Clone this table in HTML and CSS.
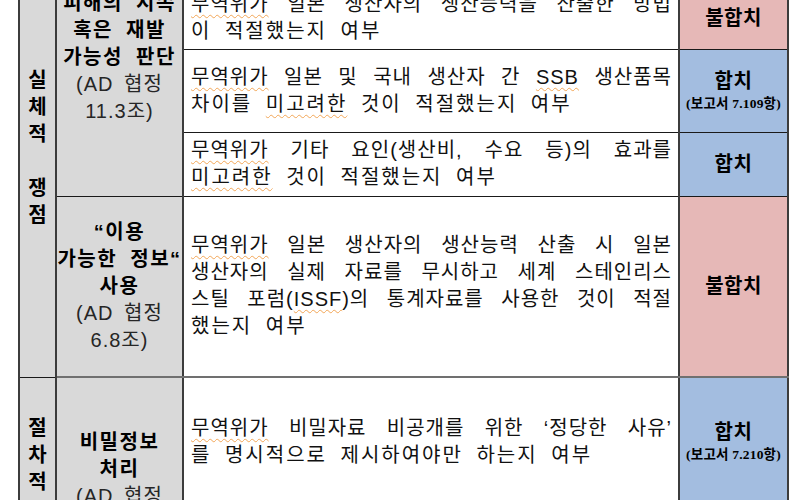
FILE: index.html
```html
<!DOCTYPE html>
<html lang="ko">
<head>
<meta charset="utf-8">
<title>쟁점별 판정 결과</title>
<link rel="stylesheet" href="styles.css">
</head>
<body>
<div class="page">
<table class="grid">
  <colgroup>
    <col class="c1"><col class="c2"><col class="c3"><col class="c4">
  </colgroup>
  <tbody>
    <tr class="r0">
      <td class="cat" rowspan="5">
        <span class="ln">실</span><span class="ln">체</span><span class="ln">적</span><span class="ln">&nbsp;</span><span class="ln">쟁</span><span class="ln">점</span>
      </td>
      <td class="topic" rowspan="4">
        <span class="ln b">피해의 지속</span>
        <span class="ln b">혹은 재발</span>
        <span class="ln b">가능성 판단</span>
        <span class="ln n">(AD 협정</span>
        <span class="ln n">11.3조)</span>
      </td>
      <td class="desc">
        <span class="ln j"><span class="sp">무역위가</span> 국내 산업의 취약성을 판단한 것이</span>
        <span class="ln">적절했는지 여부</span>
      </td>
      <td class="res ok"><span class="lab">합치</span></td>
    </tr>
    <tr class="r1">
      <td class="desc">
        <span class="ln j"><span class="sp">무역위가</span> 일본 생산자의 생산능력을 산출한 방법</span>
        <span class="ln">이 적절했는지 여부</span>
      </td>
      <td class="res ng"><span class="lab">불합치</span></td>
    </tr>
    <tr class="r2">
      <td class="desc">
        <span class="ln j"><span class="sp">무역위가</span> 일본 및 국내 생산자 간 <span class="sp">SSB</span> 생산품목</span>
        <span class="ln">차이를 <span class="sp">미고려한</span> 것이 적절했는지 여부</span>
      </td>
      <td class="res ok"><span class="lab">합치</span><span class="ref">(보고서 7.109항)</span></td>
    </tr>
    <tr class="r3">
      <td class="desc">
        <span class="ln j"><span class="sp">무역위가</span> 기타 요인(생산비, 수요 등)의 효과를</span>
        <span class="ln"><span class="sp">미고려한</span> 것이 적절했는지 여부</span>
      </td>
      <td class="res ok"><span class="lab">합치</span></td>
    </tr>
    <tr class="r4">
      <td class="topic">
        <span class="ln b">“이용</span>
        <span class="ln b">가능한 정보“</span>
        <span class="ln b">사용</span>
        <span class="ln n">(AD 협정</span>
        <span class="ln n">6.8조)</span>
      </td>
      <td class="desc">
        <span class="ln j"><span class="sp">무역위가</span> 일본 생산자의 생산능력 산출 시 일본</span>
        <span class="ln j">생산자의 실제 자료를 무시하고 세계 스테인리스</span>
        <span class="ln j">스틸 포럼(<span class="sp">ISSF</span>)의 통계자료를 사용한 것이 적절</span>
        <span class="ln">했는지 여부</span>
      </td>
      <td class="res ng"><span class="lab">불합치</span></td>
    </tr>
    <tr class="r5">
      <td class="cat" rowspan="2">
        <span class="ln">절</span><span class="ln">차</span><span class="ln">적</span><span class="ln">&nbsp;</span><span class="ln">쟁</span><span class="ln">점</span>
      </td>
      <td class="topic" rowspan="2">
        <span class="ln b">비밀정보</span>
        <span class="ln b">처리</span>
        <span class="ln n">(AD 협정</span>
        <span class="ln n">6.5조 및</span>
        <span class="ln n">6.4조)</span>
      </td>
      <td class="desc">
        <span class="ln j"><span class="sp">무역위가</span> 비밀자료 비공개를 위한 ‘정당한 사유’</span>
        <span class="ln">를 명시적으로 제시하여야만 하는지 여부</span>
      </td>
      <td class="res ok"><span class="lab">합치</span><span class="ref">(보고서 7.210항)</span></td>
    </tr>
    <tr class="r6">
      <td class="desc">
        <span class="ln j"><span class="sp">무역위가</span> 비밀자료의 요약본 제출을 요구하지</span>
        <span class="ln">않은 것이 적절했는지 여부</span>
      </td>
      <td class="res ok"><span class="lab">합치</span></td>
    </tr>
  </tbody>
</table>
</div>
</body>
</html>
```

FILE: styles.css
```css
* { box-sizing: border-box; }
html, body { margin: 0; padding: 0; background: #fff; }
body {
  font-family: "Liberation Sans", "Noto Sans CJK KR", sans-serif;
  color: #000;
}
.page {
  height: 500px;
  overflow: hidden;
  padding-left: 18px;
}
.grid {
  border-collapse: collapse;
  table-layout: fixed;
  width: 769px;
  margin-top: -83px;
  border: 2px solid #111;
}
.c1 { width: 37px; }
.c2 { width: 127px; }
.c3 { width: 496px; }
.c4 { width: 109px; }

.grid td {
  padding: 0;
  vertical-align: middle;
  border-left: 2px solid #3c3c3c;
  border-right: 2px solid #3c3c3c;
  border-top: 1px solid #1a1a1a;
  border-bottom: 1px solid #1a1a1a;
}
.r0 { height: 69px; }
.r1 { height: 62px; }
.r2 { height: 83px; }
.r3 { height: 64px; }
.r4 { height: 181px; }
.r5 { height: 130px; }
.r6 { height: 109px; }
.r4 td { border-bottom: 2px solid #707070; }

.ln {
  display: block;
  line-height: 27px;
  height: 27px;
}

.cat {
  background: #d9d9d9;
  text-align: center;
  font-weight: 700;
  font-size: 20px;
}
.topic {
  background: #d9d9d9;
  text-align: center;
  font-size: 20px;
}
.topic .b { font-weight: 700; letter-spacing: 1.5px; word-spacing: 6px; }
.topic .n { font-weight: 400; color: #262626; letter-spacing: 1px; word-spacing: 4px; }

.desc {
  background: #fff;
  padding: 0 6px 0 7px !important;
  font-size: 20px;
  letter-spacing: 2px;
  word-spacing: 6px;
  color: #111;
}
.desc .j {
  text-align: justify;
  text-align-last: justify;
  letter-spacing: 1px;
  word-spacing: 0;
}
.sp {
  text-decoration: underline wavy #f2a656;
  text-decoration-thickness: 1px;
  text-underline-offset: 3px;
}

.res { text-align: center; }
.res.ng { background: #e6b8b7; }
.res.ok { background: #a3bde0; }
.lab {
  display: block;
  font-weight: 700;
  font-size: 20px;
  line-height: 26px;
  letter-spacing: 0.5px;
}
.ref {
  display: block;
  font-family: "Liberation Serif", "Noto Sans CJK KR", serif;
  font-weight: 700;
  font-size: 13.5px;
  line-height: 20px;
  letter-spacing: 0.2px;
}
```
